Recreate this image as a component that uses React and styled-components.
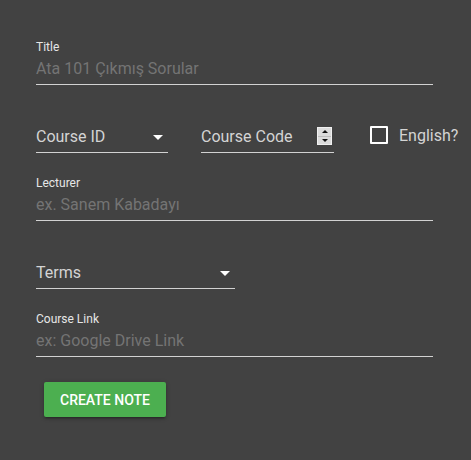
import React, { useState } from "react";
import styled, { createGlobalStyle } from "styled-components";

const GlobalStyle = createGlobalStyle`
  html, body {
    margin: 0;
    padding: 0;
    background: #424242;
  }
  body {
    font-family: Roboto, "Noto Sans", sans-serif;
    min-height: 460px;
  }
`;

const App = () => {
  const [english, setEnglish] = useState(false);

  return (
    <SPage>
      <GlobalStyle />
      <SForm onSubmit={(e) => e.preventDefault()}>
        <SField>
          <SLabel>Title</SLabel>
          <SInput placeholder="Ata 101 Çıkmış Sorular" />
        </SField>

        <SRow>
          <SSelect width="132px">
            <span>Course ID</span>
            <SArrow />
          </SSelect>
          <SNumber>
            <span>Course Code</span>
            <SSpinner>
              <SSpinButton>
                <SUp />
              </SSpinButton>
              <SSpinButton>
                <SDown />
              </SSpinButton>
            </SSpinner>
          </SNumber>
          <SCheckLabel onClick={() => setEnglish(!english)}>
            <SCheckBox checked={english} />
            <span>English?</span>
          </SCheckLabel>
        </SRow>

        <SField>
          <SLabel>Lecturer</SLabel>
          <SInput placeholder="ex. Sanem Kabadayı" />
        </SField>

        <SRow>
          <SSelect width="199px">
            <span>Terms</span>
            <SArrow />
          </SSelect>
        </SRow>

        <SField>
          <SLabel>Course Link</SLabel>
          <SInput placeholder="ex: Google Drive Link" />
        </SField>

        <SButton type="submit">Create Note</SButton>
      </SForm>
    </SPage>
  );
};

const SPage = styled.div`
  min-height: 460px;
  background: #424242;
  padding: 17px 38px 0 36px;
  box-sizing: border-box;
`;

const SForm = styled.form`
  width: 397px;
  display: flex;
  flex-direction: column;
`;

const SField = styled.div`
  height: 68px;
  display: flex;
  flex-direction: column;
  justify-content: flex-end;
`;

const SLabel = styled.label`
  font-size: 12px;
  line-height: 14px;
  color: #e6e6e6;
  margin-bottom: 5px;
`;

const SInput = styled.input`
  font-family: inherit;
  font-size: 16px;
  line-height: 20px;
  height: 20px;
  padding: 0 0 5px 0;
  margin: 0;
  border: none;
  border-bottom: 1px solid #d2d2d2;
  background: transparent;
  color: #e0e0e0;
  outline: none;
  &::placeholder {
    color: #747474;
    opacity: 1;
  }
`;

const SRow = styled.div`
  height: 68px;
  display: flex;
  align-items: flex-end;
  & > * {
    flex-shrink: 0;
  }
`;

const SUnderlined = styled.div`
  box-sizing: border-box;
  height: 26px;
  display: flex;
  align-items: center;
  justify-content: space-between;
  padding-bottom: 5px;
  border-bottom: 1px solid #d2d2d2;
  font-size: 16px;
  line-height: 20px;
  color: #d4d4d4;
`;

const SSelect = styled(SUnderlined)`
  width: ${(p) => p.width};
  padding-right: 5px;
  cursor: pointer;
`;

const SArrow = styled.span`
  width: 0;
  height: 0;
  border-left: 5px solid transparent;
  border-right: 5px solid transparent;
  border-top: 5px solid #ffffff;
  margin-top: 1px;
`;

const SNumber = styled(SUnderlined)`
  width: 133px;
  margin-left: 33px;
  padding-right: 2px;
`;

const SSpinner = styled.span`
  width: 15px;
  height: 18px;
  margin-top: -2px;
  box-sizing: border-box;
  border: 1px solid #f0f0f0;
  background: #dcdcdc;
  display: flex;
  flex-direction: column;
`;

const SSpinButton = styled.span`
  flex: 1;
  display: flex;
  align-items: center;
  justify-content: center;
  & + & {
    border-top: 1px solid #bdbdbd;
  }
`;

const SUp = styled.span`
  width: 0;
  height: 0;
  border-left: 3px solid transparent;
  border-right: 3px solid transparent;
  border-bottom: 3px solid #111;
`;

const SDown = styled.span`
  width: 0;
  height: 0;
  border-left: 3px solid transparent;
  border-right: 3px solid transparent;
  border-top: 3px solid #111;
`;

const SCheckLabel = styled.div`
  height: 26px;
  display: flex;
  align-items: center;
  margin-left: 36px;
  padding-bottom: 8px;
  box-sizing: border-box;
  font-size: 16px;
  line-height: 20px;
  color: #d4d4d4;
  cursor: pointer;
  white-space: nowrap;
`;

const SCheckBox = styled.span`
  width: 18px;
  height: 18px;
  box-sizing: border-box;
  border: 2px solid #ffffff;
  border-radius: 1px;
  margin-right: 11px;
  margin-top: -2px;
  background: ${(p) => (p.checked ? "#4caf50" : "transparent")};
`;

const SButton = styled.button`
  align-self: flex-start;
  margin: 25px 0 0 8px;
  height: 35px;
  padding: 0 16px;
  border: none;
  border-radius: 2px;
  background: #4caf50;
  color: #ffffff;
  font-family: inherit;
  font-size: 14px;
  font-weight: 500;
  letter-spacing: 0;
  text-transform: uppercase;
  box-shadow: 0 2px 2px 0 rgba(0, 0, 0, 0.14), 0 3px 1px -2px rgba(0, 0, 0, 0.12),
    0 1px 5px 0 rgba(0, 0, 0, 0.2);
  cursor: pointer;
`;

export default App;
